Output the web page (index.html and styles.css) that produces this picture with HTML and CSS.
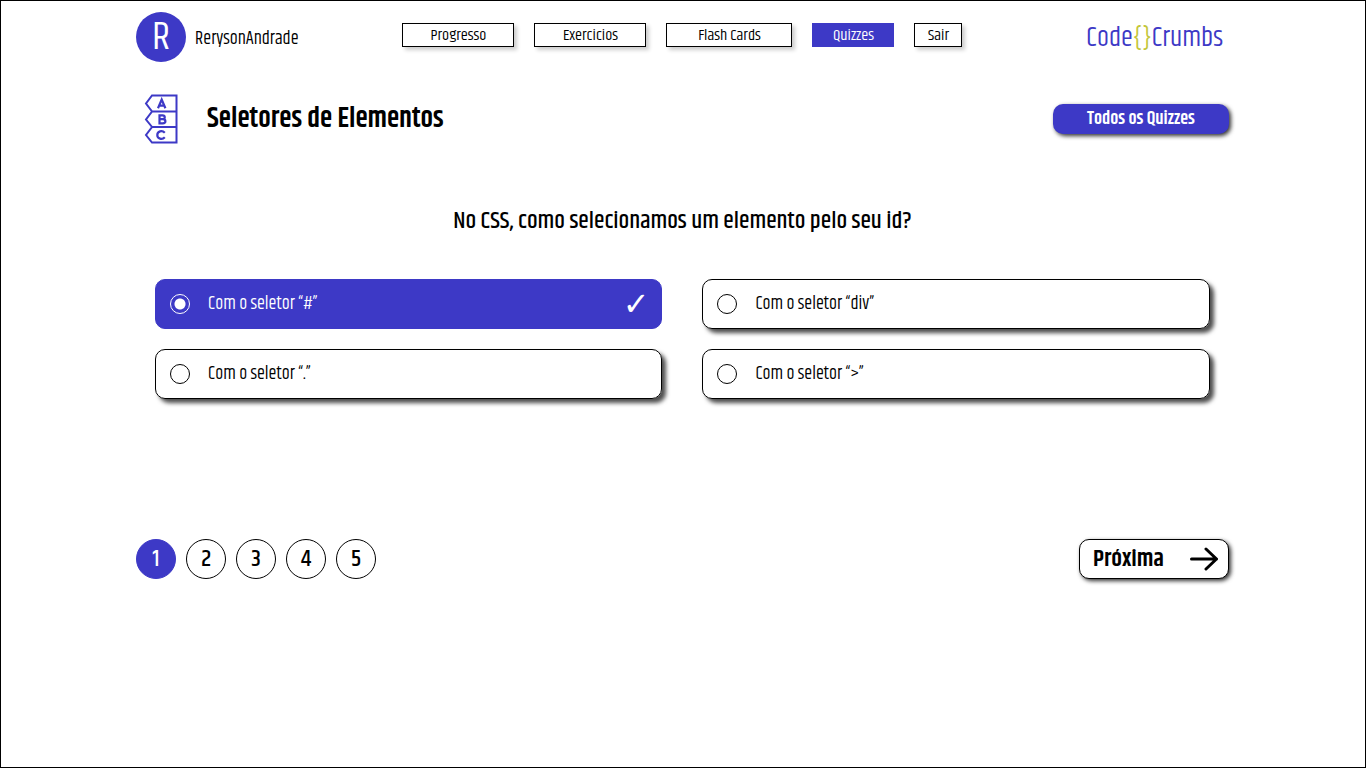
FILE: index.html
```html
<!DOCTYPE html>
<html lang="pt-BR">
<head>
  <meta charset="utf-8">
  <meta name="viewport" content="width=device-width, initial-scale=1">
  <title>Code{}Crumbs</title>
  <link rel="stylesheet" href="styles.css">
</head>
<body>
  <div class="page">
    <header class="header">
      <div class="user">
        <span class="avatar">R</span>
        <span class="username">RerysonAndrade</span>
      </div>
      <nav class="nav">
        <a class="nav-link wide" href="#">Progresso</a>
        <a class="nav-link wide" href="#">Exercicios</a>
        <a class="nav-link wider" href="#">Flash Cards</a>
        <a class="nav-link medium active" href="#">Quizzes</a>
        <a class="nav-link" href="#">Sair</a>
      </nav>
      <a class="logo" href="#">Code<span class="braces">{}</span>Crumbs</a>
    </header>

    <div class="title-bar">
      <svg class="quiz-icon" viewBox="0 0 34 50" width="34" height="50" fill="none" stroke="currentColor" stroke-width="2" aria-hidden="true">
        <path d="M8 1.500H32.500V48.500H8L2 41L8 33L2 25.500L8 17.500L2 9.500ZM8 17.500H32.500M8 33H32.500"/>
        <path stroke-width="2.200" d="M14 14.300L17.700 5.500L21.400 14.300M15 11.700H20.400M15.500 21.300V29.300H18.700C22.300 29.300 22.300 25.200 18.700 25.200H15.500H18.500C21.500 25.200 21.500 21.300 18.500 21.300ZM20.800 38.800C18 35.800 13.300 37.300 13.300 41C13.300 44.700 18 46.200 20.800 43.200"/>
      </svg>
      <h1 class="title">Seletores de Elementos</h1>
      <button class="all-button" type="button">Todos os Quizzes</button>
    </div>

    <main class="quiz">
      <h2 class="question" id="question">No CSS, como selecionamos um elemento pelo seu id?</h2>
      <div class="options" role="radiogroup" aria-labelledby="question">
        <label class="option chosen">
          <input class="radio" type="radio" name="answer" checked>
          <span>Com o seletor “#”</span>
          <span class="check">✓</span>
        </label>
        <label class="option">
          <input class="radio" type="radio" name="answer">
          <span>Com o seletor “div”</span>
        </label>
        <label class="option">
          <input class="radio" type="radio" name="answer">
          <span>Com o seletor “.”</span>
        </label>
        <label class="option">
          <input class="radio" type="radio" name="answer">
          <span>Com o seletor “&gt;”</span>
        </label>
      </div>
    </main>

    <footer class="footer">
      <div class="steps">
        <button class="step current" type="button">1</button>
        <button class="step" type="button">2</button>
        <button class="step" type="button">3</button>
        <button class="step" type="button">4</button>
        <button class="step" type="button">5</button>
      </div>
      <button class="next" type="button">
        <span>Próxima</span>
        <svg viewBox="0 0 28 24" width="28" height="24" fill="none" stroke="currentColor" stroke-width="3" stroke-linecap="round" stroke-linejoin="round" aria-hidden="true">
          <path d="M1.500 12H26.500M16 2L26.500 12L16 22"/>
        </svg>
      </button>
    </footer>
  </div>
</body>
</html>
```
FILE: styles.css
```css
* {
  box-sizing: border-box;
}

body {
  margin: 0;
  min-height: 100vh;
  border: 1px solid #000;
  background: #fff;
  color: #000;
  font-family: Khand, "Liberation Sans Narrow", "Liberation Sans", sans-serif;
  font-size: 18px;
  font-weight: 400;
}

button {
  font-family: inherit;
  color: inherit;
  cursor: pointer;
}

.page {
  width: calc(80vw + 1px);
  min-width: 960px;
  margin: 0 auto;
  padding: 11px 1px 0 0;
}

.header {
  display: grid;
  grid-template-columns: 1fr auto 1fr;
  align-items: center;
  min-height: 50px;
}

.user {
  display: flex;
  align-items: center;
  gap: 9px;
}

.avatar {
  display: flex;
  align-items: center;
  justify-content: center;
  width: 50px;
  height: 50px;
  border-radius: 50%;
  background: #3d39c6;
  color: #fff;
  font-size: 40px;
}

.username {
  padding-top: 3px;
}

.nav {
  display: flex;
  gap: 20px;
  padding-bottom: 4px;
  font-size: 16px;
}

.nav-link {
  min-width: 48px;
  height: 24px;
  border: 1px solid #000;
  box-shadow: 3px 3px 4px rgba(0, 0, 0, 0.2);
  color: inherit;
  line-height: 24px;
  text-align: center;
  text-decoration: none;
}

.wide {
  min-width: 112px;
}

.wider {
  min-width: 126px;
}

.medium {
  min-width: 82px;
}

.active {
  border-color: #3d39c6;
  background: #3d39c6;
  box-shadow: none;
  color: #fff;
}

.logo {
  justify-self: end;
  padding: 2px 6px 0 0;
  color: #3d39c6;
  font-size: 27px;
  font-weight: 400;
  text-decoration: none;
}

.braces {
  color: #c3c63a;
}

.title-bar {
  display: flex;
  align-items: center;
  margin-top: 32px;
  padding-left: 8px;
}

.quiz-icon {
  color: #3d39c6;
}

.title {
  margin: 0 auto 0 29px;
  font-size: 28px;
  font-weight: 600;
  line-height: 32px;
}

.all-button {
  width: 176px;
  height: 30px;
  border: 0;
  border-radius: 10px;
  background: #3d39c6;
  box-shadow: 2px 2px 4px rgba(0, 0, 0, 0.8);
  color: #fff;
  font-size: 18px;
  font-weight: 600;
}

.quiz {
  min-height: 346px;
  padding: 61px 19px 0;
}

.question {
  margin: 0;
  font-size: 24px;
  font-weight: 500;
  line-height: 32px;
  text-align: center;
}

.options {
  display: grid;
  grid-template-columns: 1fr 1fr;
  gap: 20px 40px;
  margin-top: 42px;
}

.option {
  display: flex;
  align-items: center;
  gap: 18px;
  height: 50px;
  padding: 0 12px 0 14px;
  border: 1px solid #000;
  border-radius: 10px;
  box-shadow: 4px 4px 4px rgba(0, 0, 0, 0.7);
}

.chosen {
  border-color: #3d39c6;
  background: #3d39c6;
  box-shadow: none;
  color: #fff;
}

.radio {
  appearance: none;
  width: 20px;
  height: 20px;
  margin: 0;
  border: 1px solid currentColor;
  border-radius: 50%;
  color: inherit;
}

.radio:checked {
  background: radial-gradient(circle, #fff 5px, transparent 6px);
}

.check {
  margin-left: auto;
  font-family: "DejaVu Sans", sans-serif;
  font-size: 32px;
}

.footer {
  display: flex;
  align-items: center;
  justify-content: space-between;
  margin-top: 49px;
}

.steps {
  display: flex;
  gap: 10px;
}

.step {
  width: 40px;
  height: 40px;
  padding: 0;
  border: 1px solid #000;
  border-radius: 50%;
  background: #fff;
  font-size: 24px;
  font-weight: 500;
}

.current {
  border-color: #3d39c6;
  background: #3d39c6;
  color: #fff;
}

.next {
  display: flex;
  align-items: center;
  justify-content: space-between;
  width: 150px;
  height: 40px;
  padding: 0 10px 0 13px;
  border: 1px solid #000;
  border-radius: 10px;
  background: #fff;
  box-shadow: 2px 2px 4px rgba(0, 0, 0, 0.8);
  font-size: 24px;
  font-weight: 600;
}
```
